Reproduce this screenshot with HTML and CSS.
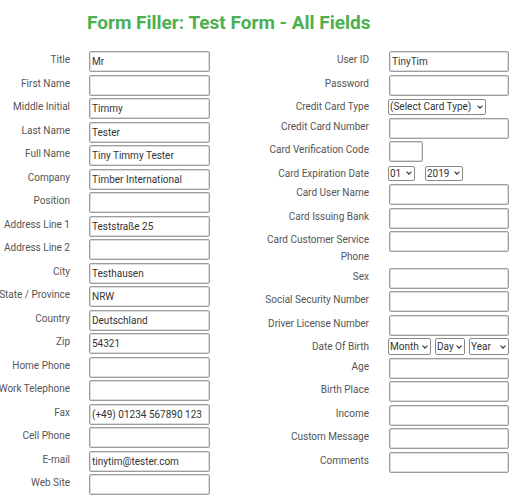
FILE: index.html
```html
<!DOCTYPE html>
<html>
<head>
<meta charset="utf-8">
<link rel="stylesheet" href="styles.css">
</head>
<body>
<h1 class="title">Form Filler: Test Form - All Fields</h1>
<div class="form">
  <div class="col col-left">
    <div class="lbl"><span>Title</span></div><div class="fld"><input class="txt" value="Mr"></div>
    <div class="lbl"><span>First Name</span></div><div class="fld"><input class="txt" value=""></div>
    <div class="lbl"><span>Middle Initial</span></div><div class="fld"><input class="txt" value="Timmy"></div>
    <div class="lbl"><span>Last Name</span></div><div class="fld"><input class="txt" value="Tester"></div>
    <div class="lbl"><span>Full Name</span></div><div class="fld"><input class="txt" value="Tiny Timmy Tester"></div>
    <div class="lbl"><span>Company</span></div><div class="fld"><input class="txt" value="Timber International"></div>
    <div class="lbl"><span>Position</span></div><div class="fld"><input class="txt" value=""></div>
    <div class="lbl"><span>Address Line 1</span></div><div class="fld"><input class="txt" value="Teststraße 25"></div>
    <div class="lbl"><span>Address Line 2</span></div><div class="fld"><input class="txt" value=""></div>
    <div class="lbl"><span>City</span></div><div class="fld"><input class="txt" value="Testhausen"></div>
    <div class="lbl"><span>State / Province</span></div><div class="fld"><input class="txt" value="NRW"></div>
    <div class="lbl"><span>Country</span></div><div class="fld"><input class="txt" value="Deutschland"></div>
    <div class="lbl"><span>Zip</span></div><div class="fld"><input class="txt" value="54321"></div>
    <div class="lbl"><span>Home Phone</span></div><div class="fld"><input class="txt" value=""></div>
    <div class="lbl"><span>Work Telephone</span></div><div class="fld"><input class="txt" value=""></div>
    <div class="lbl"><span>Fax</span></div><div class="fld"><input class="txt" value="(+49) 01234 567890 123"></div>
    <div class="lbl"><span>Cell Phone</span></div><div class="fld"><input class="txt" value=""></div>
    <div class="lbl"><span>E-mail</span></div><div class="fld"><input class="txt" value="tinytim@tester.com"></div>
    <div class="lbl"><span>Web Site</span></div><div class="fld"><input class="txt" value=""></div>
  </div>
  <div class="col col-right">
    <div class="lbl"><span>User ID</span></div><div class="fld"><input class="txt" value="TinyTim"></div>
    <div class="lbl"><span>Password</span></div><div class="fld"><input class="txt" type="password" value=""></div>
    <div class="lbl"><span>Credit Card Type</span></div><div class="fld sel-row"><span class="selwrap"><select class="sel sel-type"><option>(Select Card Type)</option></select></span></div>
    <div class="lbl"><span>Credit Card Number</span></div><div class="fld"><input class="txt" value=""></div>
    <div class="lbl"><span>Card Verification Code</span></div><div class="fld"><input class="txt txt-short" value=""></div>
    <div class="lbl"><span>Card Expiration Date</span></div><div class="fld sel-row exp"><span class="selwrap"><select class="sel sel-mm"><option>01</option></select></span><span class="selwrap"><select class="sel sel-yy"><option>2019</option></select></span></div>
    <div class="lbl"><span>Card User Name</span></div><div class="fld"><input class="txt" value=""></div>
    <div class="lbl"><span>Card Issuing Bank</span></div><div class="fld"><input class="txt" value=""></div>
    <div class="lbl wrap"><span>Card Customer Service Phone</span></div><div class="fld"><input class="txt" value=""></div>
    <div class="lbl"><span>Sex</span></div><div class="fld"><input class="txt" value=""></div>
    <div class="lbl"><span>Social Security Number</span></div><div class="fld"><input class="txt" value=""></div>
    <div class="lbl"><span>Driver License Number</span></div><div class="fld"><input class="txt" value=""></div>
    <div class="lbl"><span>Date Of Birth</span></div><div class="fld sel-row dob"><span class="selwrap"><select class="sel sel-month"><option>Month</option></select></span><span class="selwrap"><select class="sel sel-day"><option>Day</option></select></span><span class="selwrap"><select class="sel sel-year"><option>Year</option></select></span></div>
    <div class="lbl"><span>Age</span></div><div class="fld"><input class="txt" value=""></div>
    <div class="lbl"><span>Birth Place</span></div><div class="fld"><input class="txt" value=""></div>
    <div class="lbl"><span>Income</span></div><div class="fld"><input class="txt" value=""></div>
    <div class="lbl"><span>Custom Message</span></div><div class="fld"><input class="txt" value=""></div>
    <div class="lbl"><span>Comments</span></div><div class="fld"><input class="txt" value=""></div>
  </div>
</div>
</body>
</html>
```
FILE: styles.css
```css
html, body {
  margin: 0;
  padding: 0;
  background: #fff;
}
body {
  font-family: Roboto, "Liberation Sans", sans-serif;
  overflow: hidden;
}
.title {
  margin: 11px 0 0 87px;
  font-size: 19px;
  line-height: 24px;
  font-weight: 700;
  color: #4caf50;
  white-space: nowrap;
}
.form {
  display: flex;
  align-items: flex-start;
  gap: 54px;
  margin-top: 16px;
}
.col {
  display: grid;
  row-gap: 2.5px;
  align-items: start;
}
.col-left {
  grid-template-columns: 70px 121px;
  column-gap: 19px;
}
.col-right {
  grid-template-columns: 105px 120px;
  column-gap: 20px;
}
.lbl {
  display: flex;
  justify-content: flex-end;
  font-size: 10px;
  line-height: 17px;
  color: #555;
  white-space: nowrap;
}
.lbl.wrap {
  white-space: normal;
  text-align: right;
}
.fld {
  display: flex;
}
.txt {
  box-sizing: border-box;
  width: 100%;
  height: 21px;
  margin: 0;
  padding: 0 2px;
  border: 1px solid #9d9d9d;
  border-radius: 2px;
  box-shadow: inset 0 0 0 1px #dcdcdc;
  background: #fff;
  font-family: Roboto, "Liberation Sans", sans-serif;
  font-size: 10px;
  color: #333;
  outline: none;
}
.txt-short {
  width: 34px;
}
.sel-row {
  align-items: center;
  height: 17px;
  margin-left: -1px;
}
.selwrap {
  position: relative;
  display: inline-flex;
}
.selwrap::after {
  content: "";
  position: absolute;
  right: 4px;
  top: 50%;
  width: 3px;
  height: 3px;
  margin-top: -3px;
  border-right: 1.5px solid #222;
  border-bottom: 1.5px solid #222;
  transform: rotate(45deg);
  pointer-events: none;
}
.sel {
  -webkit-appearance: none;
  appearance: none;
  box-sizing: border-box;
  height: 16px;
  margin: 0;
  padding: 0 0 0 1px;
  border: 1px solid #8a8a8a;
  border-radius: 2px;
  background: #fff;
  font-family: Roboto, "Liberation Sans", sans-serif;
  font-size: 10px;
  line-height: 14px;
  color: #333;
  outline: none;
}
.sel-type { width: 98px; }
.exp { gap: 10px; }
.sel-mm { width: 27px; height: 15px; }
.sel-yy { width: 38px; height: 15px; }
.dob { gap: 4px; }
.sel-month { width: 43px; height: 17px; }
.sel-day { width: 30px; height: 17px; }
.sel-year { width: 40px; height: 17px; }
```
